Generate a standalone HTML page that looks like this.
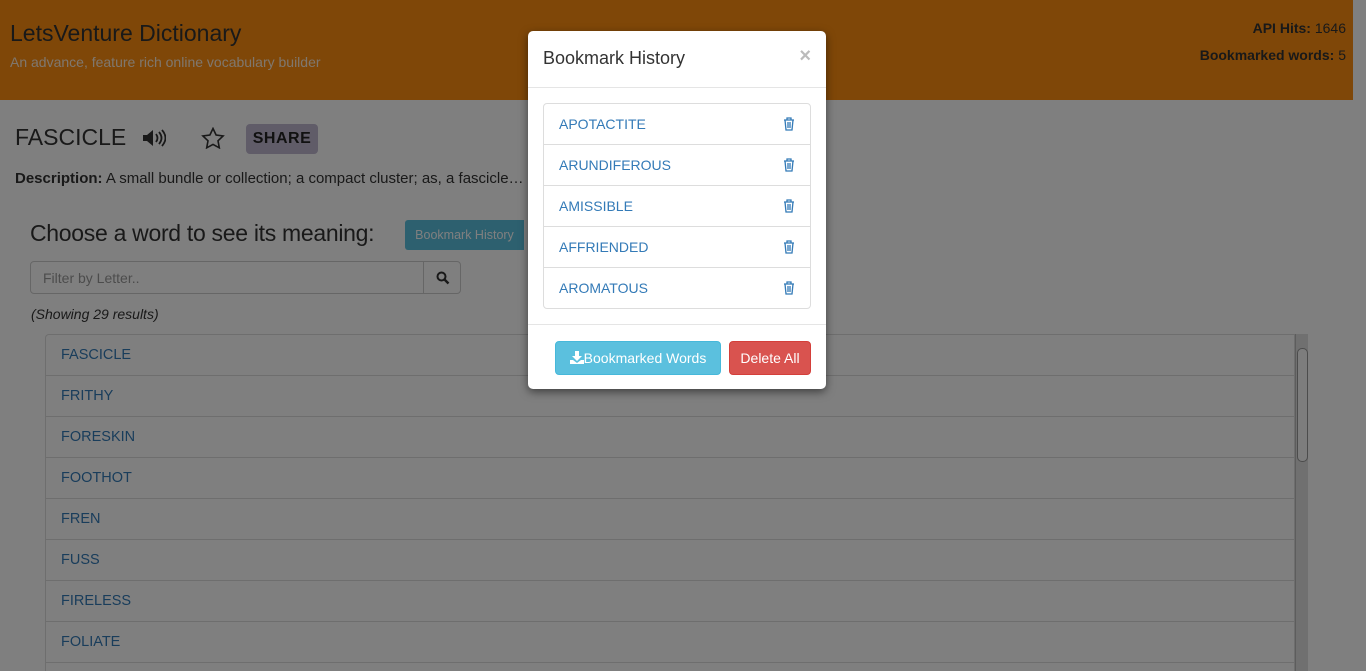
<!DOCTYPE html>
<html><head><meta charset="utf-8"><style>
*{box-sizing:border-box;margin:0;padding:0}
html,body{width:1366px;height:671px;overflow:hidden}
body{background:#fff;font-family:"Liberation Sans",sans-serif;position:relative;color:#333}
.hdr{position:absolute;left:0;top:0;width:1353px;height:100px;background:#fe8e10}
.t1{position:absolute;left:10px;top:20px;font-size:23px;color:#333}
.t2{position:absolute;left:10px;top:54px;font-size:14px;color:#fff;opacity:.85}
.r{position:absolute;right:20px;font-size:14px;color:#333}
.word{position:absolute;left:15px;top:124px;font-size:23px}
.share{position:absolute;left:246px;top:124px;width:72px;height:30px;background:#c0b8d0;border-radius:4px;font-weight:bold;font-size:16px;color:#222;text-align:center;line-height:30px;letter-spacing:.5px}
.desc{position:absolute;left:15px;top:170px;font-size:15px;white-space:nowrap}
.choose{position:absolute;left:30px;top:220px;font-size:23px;letter-spacing:-.3px}
.bh{position:absolute;left:405px;top:220px;width:119px;height:30px;background:#5bc0de;color:#fff;font-size:12.5px;line-height:30px;text-align:center;border-radius:3px 0 0 3px}
.inp{position:absolute;left:30px;top:261px;width:431px;height:33px;border:1px solid #ccc;border-radius:4px;background:#fff}
.inp span{position:absolute;left:12px;top:8px;font-size:14px;color:#999}
.inp i{position:absolute;left:392px;top:0;width:1px;height:31px;background:#ccc}
.show{position:absolute;left:31px;top:306px;font-style:italic;font-size:14px}
.list{position:absolute;left:45px;top:334px;width:1250px;height:337px;overflow:hidden;border:1px solid #ddd;border-bottom:0;border-radius:4px 0 0 0;background:#fff}
.list div{height:41px;border-bottom:1px solid #ddd;padding:12px 15px;font-size:14.5px;color:#337ab7}
.sb{position:absolute;left:1295px;top:334px;width:13px;height:337px;background:#e0e0e0;border-left:1px solid #bbb}
.sb b{position:absolute;left:1px;top:14px;width:11px;height:114px;background:#fafafa;border:1px solid #999;border-radius:5px}
.ov{position:absolute;left:0;top:0;width:1366px;height:671px;background:rgba(0,0,0,.5)}
.m{position:absolute;left:528px;top:31px;width:298px;height:358px;background:#fff;border-radius:5px;box-shadow:0 3px 9px rgba(0,0,0,.5)}
.mh{height:57px;border-bottom:1px solid #e5e5e5;padding:17px 15px;font-size:18px;color:#333;position:relative}
.x{position:absolute;right:15px;top:14px;font-size:20px;color:#bbb;font-weight:bold}
.ml{position:absolute;left:15px;top:72px;width:268px;border:1px solid #ddd;border-radius:4px}
.ml div{height:41px;border-bottom:1px solid #ddd;padding:12px 15px;font-size:14px;color:#337ab7;position:relative}
.ml div:last-child{border-bottom:0;height:40px}
.ml svg{position:absolute;right:15px;top:13px}
.mf{position:absolute;left:0;top:293px;width:298px;border-top:1px solid #e5e5e5}
.b1{position:absolute;left:27px;top:16px;width:166px;height:34px;background:#5bc0de;border:1px solid #46b8da;border-radius:4px;color:#fff;font-size:14px;line-height:32px;text-align:center}
.b2{position:absolute;left:201px;top:16px;width:82px;height:34px;background:#d9534f;border:1px solid #d43f3a;border-radius:4px;color:#fff;font-size:14px;line-height:32px;text-align:center}
</style></head><body>
<div class="hdr"><div class="t1">LetsVenture Dictionary</div><div class="t2">An advance, feature rich online vocabulary builder</div>
<div class="r" style="top:20px;right:7px"><b>API Hits:</b> 1646</div><div class="r" style="top:47px;right:7px"><b>Bookmarked words:</b> 5</div></div>
<div class="word">FASCICLE</div>
<svg style="position:absolute;left:142px;top:129px" width="24" height="18" viewBox="0 0 24 18"><path d="M1 6h4l6-5v16l-6-5H1z" fill="#333"/><path d="M14 5q3 4 0 8M17 3q5 6 0 12M20 1q7 8 0 16" stroke="#333" stroke-width="1.8" fill="none"/></svg>
<svg style="position:absolute;left:201px;top:127px" width="24" height="22" viewBox="0 0 24 22"><path d="M12 1.5l3.1 6.5 7 .9-5.1 4.9 1.3 7-6.3-3.4-6.3 3.4 1.3-7-5.1-4.9 7-.9z" fill="none" stroke="#333" stroke-width="1.6"/></svg>
<div class="share">SHARE</div>
<div class="desc"><b>Description:</b> A small bundle or collection; a compact cluster; as, a fascicle…</div>
<div class="choose">Choose a word to see its meaning:</div>
<div class="bh">Bookmark History</div>
<div class="inp"><span>Filter by Letter..</span><i></i>
<svg style="position:absolute;left:405px;top:9px" width="14" height="14" viewBox="0 0 14 14"><circle cx="5.5" cy="5.5" r="4" fill="none" stroke="#333" stroke-width="2"/><path d="M8.5 8.5l4 4" stroke="#333" stroke-width="2.4"/></svg></div>
<div class="show">(Showing 29 results)</div>
<div class="list"><div>FASCICLE</div><div>FRITHY</div><div>FORESKIN</div><div>FOOTHOT</div><div>FREN</div><div>FUSS</div><div>FIRELESS</div><div>FOLIATE</div><div></div></div>
<div class="sb"><b></b></div>
<div class="ov"></div>
<div class="m"><div class="mh">Bookmark History<span class="x">×</span></div>
<div class="ml">
<div>APOTACTITE<svg width="12" height="14" viewBox="0 0 12 14"><path d="M1 3h10M4 3V1h4v2M2 3l1 10h6l1-10M5 5v6M7 5v6" fill="none" stroke="#337ab7" stroke-width="1.3"/></svg></div>
<div>ARUNDIFEROUS<svg width="12" height="14" viewBox="0 0 12 14"><path d="M1 3h10M4 3V1h4v2M2 3l1 10h6l1-10M5 5v6M7 5v6" fill="none" stroke="#337ab7" stroke-width="1.3"/></svg></div>
<div>AMISSIBLE<svg width="12" height="14" viewBox="0 0 12 14"><path d="M1 3h10M4 3V1h4v2M2 3l1 10h6l1-10M5 5v6M7 5v6" fill="none" stroke="#337ab7" stroke-width="1.3"/></svg></div>
<div>AFFRIENDED<svg width="12" height="14" viewBox="0 0 12 14"><path d="M1 3h10M4 3V1h4v2M2 3l1 10h6l1-10M5 5v6M7 5v6" fill="none" stroke="#337ab7" stroke-width="1.3"/></svg></div>
<div>AROMATOUS<svg width="12" height="14" viewBox="0 0 12 14"><path d="M1 3h10M4 3V1h4v2M2 3l1 10h6l1-10M5 5v6M7 5v6" fill="none" stroke="#337ab7" stroke-width="1.3"/></svg></div>
</div>
<div class="mf"><div class="b1"><svg width="14" height="13" viewBox="0 0 14 13" style="vertical-align:-1px"><path d="M5 0h4v5h3L7 10 2 5h3z M0 9h3l4 3 4-3h3v4H0z" fill="#fff"/></svg>Bookmarked Words</div><div class="b2">Delete All</div></div>
</div>
</body></html>
